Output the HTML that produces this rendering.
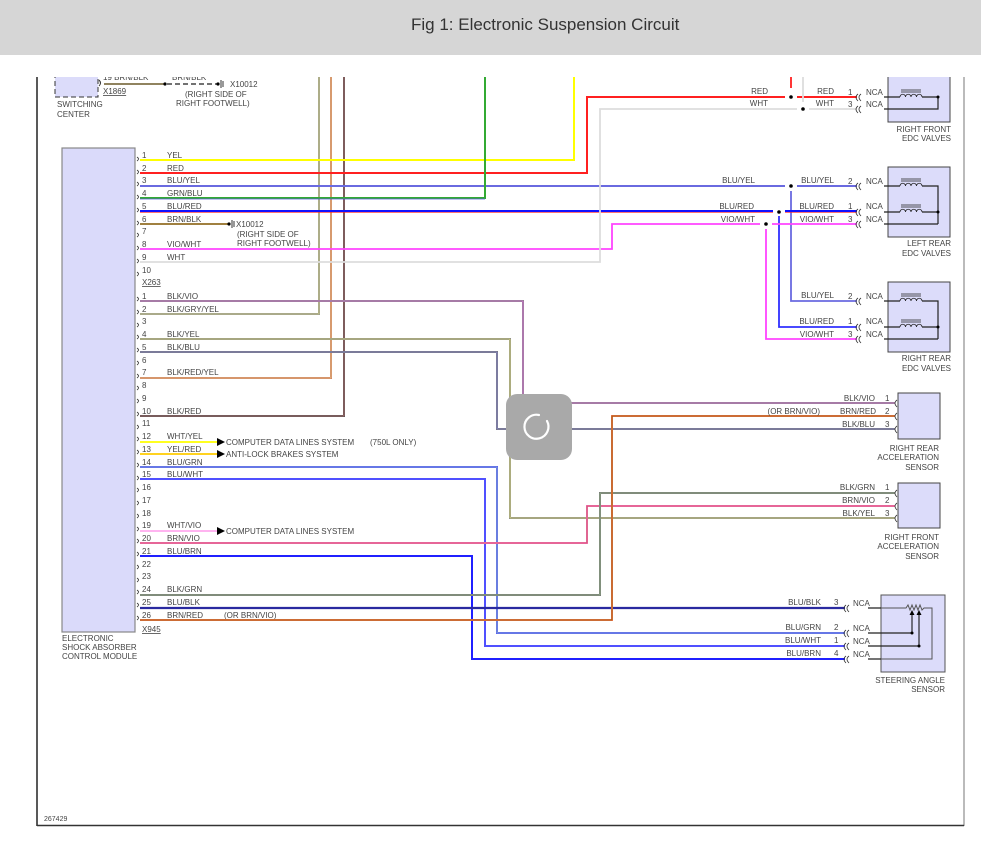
<!DOCTYPE html>
<html><head><meta charset="utf-8"><style>
html,body{margin:0;padding:0;background:#fff;width:981px;height:842px;overflow:hidden}
.hdr{position:absolute;left:0;top:0;width:981px;height:55px;background:#d6d6d6;font-family:"Liberation Sans",sans-serif;font-size:17px;color:#333;line-height:50px}
.hdr span{position:absolute;left:411px;top:0;white-space:nowrap}
svg{position:absolute;left:0;top:0}
text{font-family:"Liberation Sans",sans-serif;font-size:8px;fill:#444}
.w{fill:none;stroke-linejoin:miter}
</style></head><body>
<div class="hdr"><span>Fig 1: Electronic Suspension Circuit</span></div>
<svg width="981" height="842" viewBox="0 0 981 842">
<defs><clipPath id="c"><rect x="0" y="77" width="981" height="765"/></clipPath></defs>
<line x1="37" y1="77" x2="37" y2="826" stroke="#222" stroke-width="1.5"/>
<line x1="964" y1="77" x2="964" y2="826" stroke="#777" stroke-width="1"/>
<line x1="37" y1="825.5" x2="964" y2="825.5" stroke="#333" stroke-width="1.5"/>
<text x="44" y="821" style="font-size:7px">267429</text>

<g clip-path="url(#c)">
<rect x="55" y="66" width="43" height="31" fill="#dcdcfa" stroke="#333" stroke-dasharray="5,3"/>
<text x="103" y="80">19   BRN/BLK</text>
<text x="172" y="80">BRN/BLK</text>
<path d="M99 80 q3 3 0 6" class="w" stroke="#333"/>
<line x1="104" y1="84" x2="164" y2="84" stroke="#6b5a2a" stroke-width="1.5"/>
<circle cx="165" cy="84" r="1.6" fill="#000"/>
<line x1="167" y1="84" x2="217" y2="84" stroke="#444" stroke-width="1.5" stroke-dasharray="5,3"/>
<circle cx="218" cy="84" r="1.6" fill="#000"/>
<line x1="221" y1="80" x2="221" y2="88" stroke="#333"/><line x1="223" y1="81" x2="223" y2="87" stroke="#333"/>
</g>
<text x="103" y="94" text-decoration="underline">X1869</text>
<text x="230" y="87">X10012</text>
<text x="185" y="97">(RIGHT SIDE OF</text>
<text x="176" y="106">RIGHT FOOTWELL)</text>
<text x="57" y="107">SWITCHING</text>
<text x="57" y="117">CENTER</text>

<rect x="62" y="148" width="73" height="484" fill="#dadafa" stroke="#888" stroke-width="1.2"/>
<text x="62" y="641">ELECTRONIC</text>
<text x="62" y="650">SHOCK ABSORBER</text>
<text x="62" y="659">CONTROL MODULE</text>
<text x="142" y="285" text-decoration="underline">X263</text>
<text x="142" y="632" text-decoration="underline">X945</text>

<g stroke="#333" fill="none" stroke-width="0.8">
<path d="M137 157 q3 2 0 4 M137 170 q3 2 0 4 M137 182 q3 2 0 4 M137 195 q3 2 0 4 M137 208 q3 2 0 4 M137 221 q3 2 0 4 M137 233 q3 2 0 4 M137 246 q3 2 0 4 M137 259 q3 2 0 4 M137 272 q3 2 0 4"/>
<path d="M137 297 q3 2 0 4 M137 310 q3 2 0 4 M137 323 q3 2 0 4 M137 335 q3 2 0 4 M137 348 q3 2 0 4 M137 361 q3 2 0 4 M137 374 q3 2 0 4 M137 386 q3 2 0 4 M137 399 q3 2 0 4 M137 412 q3 2 0 4 M137 425 q3 2 0 4 M137 437 q3 2 0 4 M137 450 q3 2 0 4 M137 463 q3 2 0 4 M137 476 q3 2 0 4 M137 488 q3 2 0 4 M137 501 q3 2 0 4 M137 514 q3 2 0 4 M137 527 q3 2 0 4 M137 539 q3 2 0 4 M137 552 q3 2 0 4 M137 565 q3 2 0 4 M137 578 q3 2 0 4 M137 590 q3 2 0 4 M137 603 q3 2 0 4 M137 616 q3 2 0 4"/>
</g>

<g>
<text x="142" y="158">1</text><text x="167" y="158">YEL</text>
<text x="142" y="171">2</text><text x="167" y="171">RED</text>
<text x="142" y="183">3</text><text x="167" y="183">BLU/YEL</text>
<text x="142" y="196">4</text><text x="167" y="196">GRN/BLU</text>
<text x="142" y="209">5</text><text x="167" y="209">BLU/RED</text>
<text x="142" y="222">6</text><text x="167" y="222">BRN/BLK</text>
<text x="142" y="234">7</text>
<text x="142" y="247">8</text><text x="167" y="247">VIO/WHT</text>
<text x="142" y="260">9</text><text x="167" y="260">WHT</text>
<text x="142" y="273">10</text>
</g>
<g>
<text x="142" y="299">1</text><text x="167" y="299">BLK/VIO</text>
<text x="142" y="312">2</text><text x="167" y="312">BLK/GRY/YEL</text>
<text x="142" y="324">3</text>
<text x="142" y="337">4</text><text x="167" y="337">BLK/YEL</text>
<text x="142" y="350">5</text><text x="167" y="350">BLK/BLU</text>
<text x="142" y="363">6</text>
<text x="142" y="375">7</text><text x="167" y="375">BLK/RED/YEL</text>
<text x="142" y="388">8</text>
<text x="142" y="401">9</text>
<text x="142" y="414">10</text><text x="167" y="414">BLK/RED</text>
<text x="142" y="426">11</text>
<text x="142" y="439">12</text><text x="167" y="439">WHT/YEL</text>
<text x="142" y="452">13</text><text x="167" y="452">YEL/RED</text>
<text x="142" y="465">14</text><text x="167" y="465">BLU/GRN</text>
<text x="142" y="477">15</text><text x="167" y="477">BLU/WHT</text>
<text x="142" y="490">16</text>
<text x="142" y="503">17</text>
<text x="142" y="516">18</text>
<text x="142" y="528">19</text><text x="167" y="528">WHT/VIO</text>
<text x="142" y="541">20</text><text x="167" y="541">BRN/VIO</text>
<text x="142" y="554">21</text><text x="167" y="554">BLU/BRN</text>
<text x="142" y="567">22</text>
<text x="142" y="579">23</text>
<text x="142" y="592">24</text><text x="167" y="592">BLK/GRN</text>
<text x="142" y="605">25</text><text x="167" y="605">BLU/BLK</text>
<text x="142" y="618">26</text><text x="167" y="618">BRN/RED</text>
<text x="224" y="618">(OR BRN/VIO)</text>
</g>

<g clip-path="url(#c)" class="w" stroke-width="1.8">
<path d="M140 314 H319 V70" stroke="#999" stroke-width="2"/><path d="M140 314 H319 V70" stroke="#dddd60" stroke-width="0.6"/>
<path d="M140 378 H331 V70" stroke="#d08060" stroke-width="2"/><path d="M140 378 H331 V70" stroke="#e8d890" stroke-width="0.6"/>
<path d="M140 416 H344 V70" stroke="#555" stroke-width="2"/><path d="M140 416 H344 V70" stroke="#e07070" stroke-width="0.6"/>
<path d="M140 160 H574 V70" stroke="#ffff00" stroke-width="2"/>
<path d="M140 173 H587 V97 H785 M797 97 H857" stroke="#ff2020" stroke-width="2"/>
<path d="M791 70 V88" stroke="#ff2020" stroke-width="1.8"/>
<path d="M140 186 H785 M797 186 H857" stroke="#6a6ae0" stroke-width="2"/>
<path d="M791 191 V301 H857" stroke="#6a6ae0" stroke-width="1.8"/>
<path d="M140 198 H485 V70" stroke="#33aa33" stroke-width="2"/><path d="M140 199 H485" stroke="#5555dd" stroke-width="0.8"/>
<path d="M140 211 H773 M785 211 H857" stroke="#1010ff" stroke-width="2"/><path d="M140 212.3 H773 M785 212.3 H857" stroke="#ff2020" stroke-width="0.7"/>
<path d="M779 216 V327 H857" stroke="#3030ff" stroke-width="1.8"/>
<path d="M140 224 H228" stroke="#a08040" stroke-width="2"/>
<path d="M140 249 H612 V224 H760 M772 224 H857" stroke="#ff44ff" stroke-width="1.8"/>
<path d="M766 229 V339 H857" stroke="#ff44ff" stroke-width="1.8"/>
<path d="M140 262 H600 V109 H797 M809 109 H857" stroke="#dddddd" stroke-width="1.8"/>
<path d="M803 70 V102" stroke="#dddddd" stroke-width="1.8"/>
<path d="M140 301 H523 V403 H895" stroke="#888" stroke-width="2"/><path d="M140 301 H523 V403 H895" stroke="#ff55ff" stroke-width="0.6"/>
<path d="M140 339 H510 V518 H895" stroke="#888" stroke-width="2"/><path d="M140 339 H510 V518 H895" stroke="#ffff66" stroke-width="0.6"/>
<path d="M140 352 H497 V429 H895" stroke="#777" stroke-width="2"/><path d="M140 352 H497 V429 H895" stroke="#8888ff" stroke-width="0.6"/>
<path d="M140 442 H217" stroke="#ffff00" stroke-width="1.8"/>
<path d="M140 454 H217" stroke="#ffcc00" stroke-width="1.8"/>
<path d="M140 467 H497 V633 H845" stroke="#5555ff" stroke-width="2"/><path d="M140 467 H497 V633 H845" stroke="#99dd99" stroke-width="0.6"/>
<path d="M140 479 H485 V646 H845" stroke="#5050ff" stroke-width="2"/>
<path d="M140 531 H217" stroke="#ffaaee" stroke-width="1.8"/>
<path d="M140 543 H587 V506 H895" stroke="#ff66bb" stroke-width="2"/><path d="M140 543 H587 V506 H895" stroke="#996633" stroke-width="0.6"/>
<path d="M140 556 H472 V659 H845" stroke="#2020ff" stroke-width="2"/>
<path d="M140 595 H600 V493 H895" stroke="#777" stroke-width="2"/><path d="M140 595 H600 V493 H895" stroke="#99cc88" stroke-width="0.6"/>
<path d="M140 608 H845" stroke="#2a2aa0" stroke-width="2.2"/>
<path d="M140 620 H612 V416 H895" stroke="#ff7755" stroke-width="2"/><path d="M140 620 H612 V416 H895" stroke="#7a5a00" stroke-width="0.8"/>
</g>

<g fill="#000">
<circle cx="791" cy="97" r="1.8"/><circle cx="803" cy="109" r="1.8"/>
<circle cx="791" cy="186" r="1.8"/><circle cx="779" cy="212" r="1.8"/><circle cx="766" cy="224" r="1.8"/>
</g>

<circle cx="229" cy="224" r="1.6" fill="#000"/>
<line x1="232" y1="220" x2="232" y2="228" stroke="#333"/><line x1="234" y1="221" x2="234" y2="227" stroke="#333"/>
<text x="236" y="227">X10012</text>
<text x="237" y="237">(RIGHT SIDE OF</text>
<text x="237" y="246">RIGHT FOOTWELL)</text>

<path d="M217 438 L225 442 L217 446Z M217 450 L225 454 L217 458Z M217 527 L225 531 L217 535Z" fill="#000"/>
<text x="226" y="445">COMPUTER DATA LINES SYSTEM</text>
<text x="370" y="445">(750L ONLY)</text>
<text x="226" y="457">ANTI-LOCK BRAKES SYSTEM</text>
<text x="226" y="534">COMPUTER DATA LINES SYSTEM</text>

<g clip-path="url(#c)">
<rect x="888" y="66" width="62" height="56" fill="#dcdcfa" stroke="#444"/>
</g>
<rect x="888" y="167" width="62" height="70" fill="#dcdcfa" stroke="#444"/>
<rect x="888" y="282" width="62" height="70" fill="#dcdcfa" stroke="#444"/>
<g stroke="#222" fill="none" stroke-width="1.2">
<path d="M884 97 H900 M922 97 H938 M884 109 H938 V97"/>
<path d="M884 186 H900 M922 186 H938 V224 M884 212 H900 M922 212 H938 M884 224 H938"/>
<path d="M884 301 H900 M922 301 H938 V339 M884 327 H900 M922 327 H938 M884 339 H938"/>
</g>
<g stroke="#222" fill="none" stroke-width="0.8">
<path d="M900 97 a2.7 2.7 0 0 1 5.5 0 a2.7 2.7 0 0 1 5.5 0 a2.7 2.7 0 0 1 5.5 0 a2.7 2.7 0 0 1 5.5 0 M901 92 H921 M901 90 H921"/>
<path d="M900 186 a2.7 2.7 0 0 1 5.5 0 a2.7 2.7 0 0 1 5.5 0 a2.7 2.7 0 0 1 5.5 0 a2.7 2.7 0 0 1 5.5 0 M901 181 H921 M901 179 H921"/>
<path d="M900 212 a2.7 2.7 0 0 1 5.5 0 a2.7 2.7 0 0 1 5.5 0 a2.7 2.7 0 0 1 5.5 0 a2.7 2.7 0 0 1 5.5 0 M901 207 H921 M901 205 H921"/>
<path d="M900 301 a2.7 2.7 0 0 1 5.5 0 a2.7 2.7 0 0 1 5.5 0 a2.7 2.7 0 0 1 5.5 0 a2.7 2.7 0 0 1 5.5 0 M901 296 H921 M901 294 H921"/>
<path d="M900 327 a2.7 2.7 0 0 1 5.5 0 a2.7 2.7 0 0 1 5.5 0 a2.7 2.7 0 0 1 5.5 0 a2.7 2.7 0 0 1 5.5 0 M901 322 H921 M901 320 H921"/>
</g>
<g fill="#000"><circle cx="938" cy="97" r="1.5"/><circle cx="938" cy="212" r="1.5"/><circle cx="938" cy="327" r="1.5"/></g>
<g stroke="#333" fill="none" stroke-width="0.8">
<path d="M858 94 q-4 3 0 7 M861 94 q-4 3 0 7 M858 106 q-4 3 0 7 M861 106 q-4 3 0 7"/>
<path d="M858 183 q-4 3 0 7 M861 183 q-4 3 0 7 M858 209 q-4 3 0 7 M861 209 q-4 3 0 7 M858 221 q-4 3 0 7 M861 221 q-4 3 0 7"/>
<path d="M858 298 q-4 3 0 7 M861 298 q-4 3 0 7 M858 324 q-4 3 0 7 M861 324 q-4 3 0 7 M858 336 q-4 3 0 7 M861 336 q-4 3 0 7"/>
<path d="M897 400 q-4 3 0 7 M897 413 q-4 3 0 7 M897 426 q-4 3 0 7 M897 490 q-4 3 0 7 M897 503 q-4 3 0 7 M897 515 q-4 3 0 7"/>
<path d="M846 605 q-4 3 0 7 M849 605 q-4 3 0 7 M846 630 q-4 3 0 7 M849 630 q-4 3 0 7 M846 643 q-4 3 0 7 M849 643 q-4 3 0 7 M846 656 q-4 3 0 7 M849 656 q-4 3 0 7"/>
</g>
<g>
<text x="866" y="95">NCA</text><text x="866" y="107">NCA</text>
<text x="866" y="184">NCA</text><text x="866" y="209">NCA</text><text x="866" y="222">NCA</text>
<text x="866" y="299">NCA</text><text x="866" y="324">NCA</text><text x="866" y="337">NCA</text>
<text x="848" y="95">1</text><text x="848" y="107">3</text>
<text x="848" y="184">2</text><text x="848" y="209">1</text><text x="848" y="222">3</text>
<text x="848" y="299">2</text><text x="848" y="324">1</text><text x="848" y="337">3</text>
</g>
<g text-anchor="end">
<text x="768" y="94">RED</text><text x="768" y="106">WHT</text>
<text x="834" y="94">RED</text><text x="834" y="106">WHT</text>
<text x="755" y="183">BLU/YEL</text><text x="834" y="183">BLU/YEL</text>
<text x="754" y="209">BLU/RED</text><text x="834" y="209">BLU/RED</text>
<text x="755" y="222">VIO/WHT</text><text x="834" y="222">VIO/WHT</text>
<text x="834" y="298">BLU/YEL</text><text x="834" y="324">BLU/RED</text><text x="834" y="337">VIO/WHT</text>
<text x="951" y="132">RIGHT FRONT</text><text x="951" y="141">EDC VALVES</text>
<text x="951" y="246">LEFT REAR</text><text x="951" y="256">EDC VALVES</text>
<text x="951" y="361">RIGHT REAR</text><text x="951" y="371">EDC VALVES</text>
<text x="875" y="401">BLK/VIO</text><text x="876" y="414">BRN/RED</text><text x="875" y="427">BLK/BLU</text>
<text x="820" y="414">(OR BRN/VIO)</text>
<text x="875" y="490">BLK/GRN</text><text x="875" y="503">BRN/VIO</text><text x="875" y="516">BLK/YEL</text>
<text x="939" y="451">RIGHT REAR</text><text x="939" y="460">ACCELERATION</text><text x="939" y="470">SENSOR</text>
<text x="939" y="540">RIGHT FRONT</text><text x="939" y="549">ACCELERATION</text><text x="939" y="559">SENSOR</text>
<text x="821" y="605">BLU/BLK</text><text x="821" y="630">BLU/GRN</text><text x="821" y="643">BLU/WHT</text><text x="821" y="656">BLU/BRN</text>
<text x="945" y="683">STEERING ANGLE</text><text x="945" y="692">SENSOR</text>
</g>
<g>
<text x="885" y="401">1</text><text x="885" y="414">2</text><text x="885" y="427">3</text>
<text x="885" y="490">1</text><text x="885" y="503">2</text><text x="885" y="516">3</text>
<text x="834" y="605">3</text><text x="834" y="630">2</text><text x="834" y="643">1</text><text x="834" y="656">4</text>
<text x="853" y="606">NCA</text><text x="853" y="631">NCA</text><text x="853" y="644">NCA</text><text x="853" y="657">NCA</text>
</g>
<rect x="898" y="393" width="42" height="46" fill="#dcdcfa" stroke="#444"/>
<rect x="898" y="483" width="42" height="45" fill="#dcdcfa" stroke="#444"/>
<rect x="881" y="595" width="64" height="77" fill="#dcdcfa" stroke="#555"/>
<g stroke="#222" fill="none" stroke-width="1.2">
<path d="M868 608 H881 M868 633 H912 M868 646 H919 M868 659 H881"/>
</g>
<g stroke="#555" fill="none" stroke-width="1">
<path d="M881 608 H906 l2 -3 l2 5 l2 -5 l2 5 l2 -5 l2 5 l2 -5 l2 5 l2 -2 H932 V659 H881"/>
<path d="M912 633 V614 M919 646 V614" stroke="#000"/>
</g>
<path d="M909.5 615 L912 610 L914.5 615Z M916.5 615 L919 610 L921.5 615Z" fill="#000"/>
<circle cx="912" cy="633" r="1.5" fill="#000"/><circle cx="919" cy="646" r="1.5" fill="#000"/>

<rect x="506" y="394" width="66" height="66" rx="11" fill="#a9a9a9"/>
<path d="M547 421 A12 12 0 1 1 539 415" fill="none" stroke="#fff" stroke-width="2.2" stroke-linecap="round"/>
</svg>
</body></html>
